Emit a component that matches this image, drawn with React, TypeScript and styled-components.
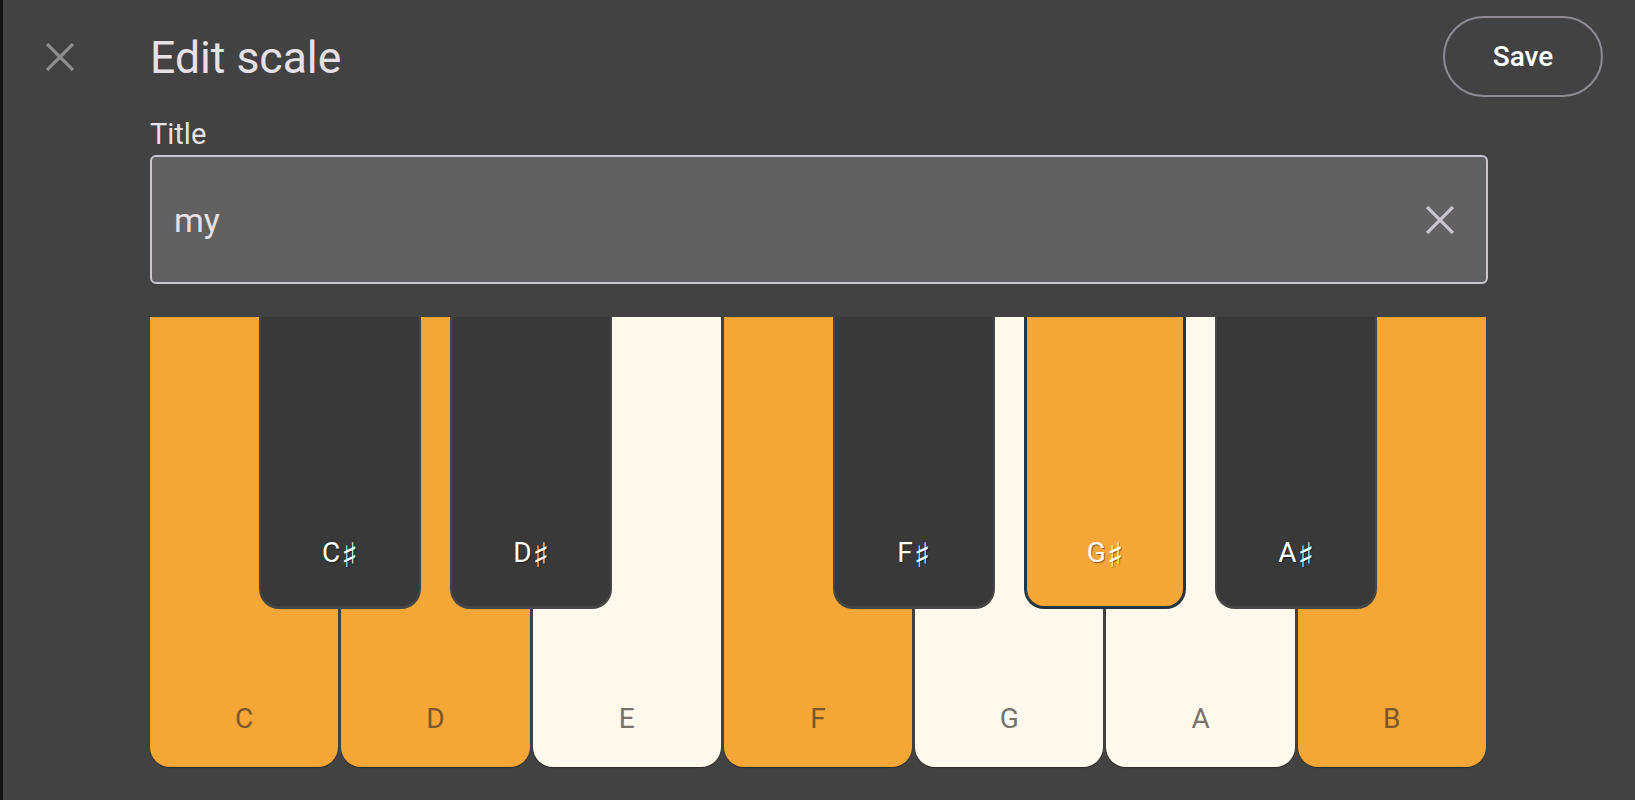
import React from "react";
import styled, { createGlobalStyle } from "styled-components";

const GlobalStyle = createGlobalStyle`
  html, body {
    margin: 0;
    padding: 0;
    background: #424242;
  }
  * { box-sizing: border-box; }
`;

const ORANGE = "#f4a637";
const CREAM = "#fff8ec";
const BLACK = "#393939";
const FONT = `Roboto, "Liberation Sans", sans-serif`;

const Page = styled.div`
  min-height: 100vh;
  background: #424242;
  box-shadow: inset 3px 0 0 #141414;
  font-family: ${FONT};
  padding-top: 16px;
`;

const Header = styled.header`
  display: flex;
  align-items: center;
  height: 81px;
  padding-right: 32px;
`;

const IconButton = styled.button<{ $color: string }>`
  display: flex;
  align-items: center;
  justify-content: center;
  width: 48px;
  height: 48px;
  padding: 0;
  border: none;
  background: transparent;
  color: ${(p) => p.$color};
  cursor: pointer;
`;

const CloseButton = styled(IconButton)`
  margin-left: 36px;
  margin-top: 1px;
`;

const Heading = styled.h1`
  margin: 2px 0 0 66px;
  font-size: 44.5px;
  line-height: 52px;
  font-weight: 400;
  color: #e6e1e5;
  flex: 1;
`;

const SaveButton = styled.button`
  width: 160px;
  height: 81px;
  border-radius: 41px;
  border: 2px solid #8f8a93;
  background: transparent;
  color: #ffffff;
  font-family: ${FONT};
  font-size: 28px;
  line-height: 33px;
  font-weight: 500;
  cursor: pointer;
`;

const Content = styled.main`
  margin-left: 150px;
  width: 1338px;
  display: flex;
  flex-direction: column;
`;

const FieldLabel = styled.label`
  margin-top: 21px;
  font-size: 29px;
  line-height: 32px;
  color: #e6e1e5;
`;

const Field = styled.div`
  margin-top: 5px;
  height: 129px;
  display: flex;
  align-items: center;
  background: #616161;
  border: 2px solid #cac4d0;
  border-radius: 6px;
  padding-left: 22px;
  padding-right: 22px;
`;

const FieldInput = styled.input`
  flex: 1;
  border: none;
  outline: none;
  background: transparent;
  font-family: ${FONT};
  font-size: 34px;
  line-height: 40px;
  color: #e6e1e5;
  padding: 0;
`;

const Keyboard = styled.div`
  position: relative;
  margin-top: 33px;
  width: 1336px;
  height: 450px;
  display: flex;
  gap: 3px;
`;

const WhiteKey = styled.div<{ $on: boolean }>`
  flex: 1;
  display: flex;
  flex-direction: column;
  justify-content: flex-end;
  align-items: center;
  padding-bottom: 32px;
  background: ${(p) => (p.$on ? ORANGE : CREAM)};
  border-radius: 0 0 20px 20px;
  box-shadow: 0 1px 1px rgba(0, 0, 0, 0.35);
`;

const WhiteLabel = styled.span<{ $on: boolean }>`
  font-size: 28px;
  line-height: 32px;
  color: ${(p) => (p.$on ? "#7b572a" : "#76726c")};
`;

const BlackKey = styled.div<{ $slot: number; $on: boolean }>`
  position: absolute;
  top: 0;
  left: calc(${(p) => p.$slot} * (100% + 3px) / 7 - 82.5px);
  width: 162px;
  height: 292px;
  display: flex;
  flex-direction: column;
  justify-content: flex-end;
  align-items: center;
  padding-bottom: 37px;
  background: ${(p) => (p.$on ? ORANGE : BLACK)};
  border: ${(p) => (p.$on ? "3px solid #26363f" : "2px solid #464646")};
  border-top: none;
  border-bottom-width: 3px;
  border-radius: 0 0 20px 20px;
`;

const BlackLabel = styled.span`
  display: flex;
  align-items: baseline;
  font-size: 28px;
  line-height: 32px;
  color: #ffffff;
  text-shadow: 1px 1px 1px rgba(0, 0, 0, 0.45);
  white-space: nowrap;
`;

const Sharp = styled.span`
  display: inline-block;
  font-family: "DejaVu Sans", sans-serif;
  font-size: 34px;
  line-height: 32px;
  margin-left: 1px;
  transform: translateY(5px);
`;

const XIcon: React.FC<{ size: number; stroke: number }> = ({ size, stroke }) => (
  <svg width={size} height={size} viewBox="0 0 28 28" fill="none">
    <path d="M1 1 L27 27 M27 1 L1 27" stroke="currentColor" strokeWidth={stroke * (28 / size)} />
  </svg>
);

const whiteKeys = [
  { n: "C", on: true },
  { n: "D", on: true },
  { n: "E", on: false },
  { n: "F", on: true },
  { n: "G", on: false },
  { n: "A", on: false },
  { n: "B", on: true },
];

const blackKeys = [
  { n: "C", slot: 1, on: false },
  { n: "D", slot: 2, on: false },
  { n: "F", slot: 4, on: false },
  { n: "G", slot: 5, on: true },
  { n: "A", slot: 6, on: false },
];

export default function App() {
  return (
    <>
      <GlobalStyle />
      <Page>
        <Header>
          <CloseButton $color="#8e8e8e" aria-label="Close">
            <XIcon size={28} stroke={3.2} />
          </CloseButton>
          <Heading>Edit scale</Heading>
          <SaveButton>Save</SaveButton>
        </Header>
        <Content>
          <FieldLabel>Title</FieldLabel>
          <Field>
            <FieldInput defaultValue="my" />
            <IconButton $color="#cac4d0" aria-label="Clear">
              <XIcon size={28} stroke={3.2} />
            </IconButton>
          </Field>
          <Keyboard>
            {whiteKeys.map((k) => (
              <WhiteKey key={k.n} $on={k.on}>
                <WhiteLabel $on={k.on}>{k.n}</WhiteLabel>
              </WhiteKey>
            ))}
            {blackKeys.map((k) => (
              <BlackKey key={k.n} $slot={k.slot} $on={k.on}>
                <BlackLabel>
                  {k.n}
                  <Sharp>♯</Sharp>
                </BlackLabel>
              </BlackKey>
            ))}
          </Keyboard>
        </Content>
      </Page>
    </>
  );
}
